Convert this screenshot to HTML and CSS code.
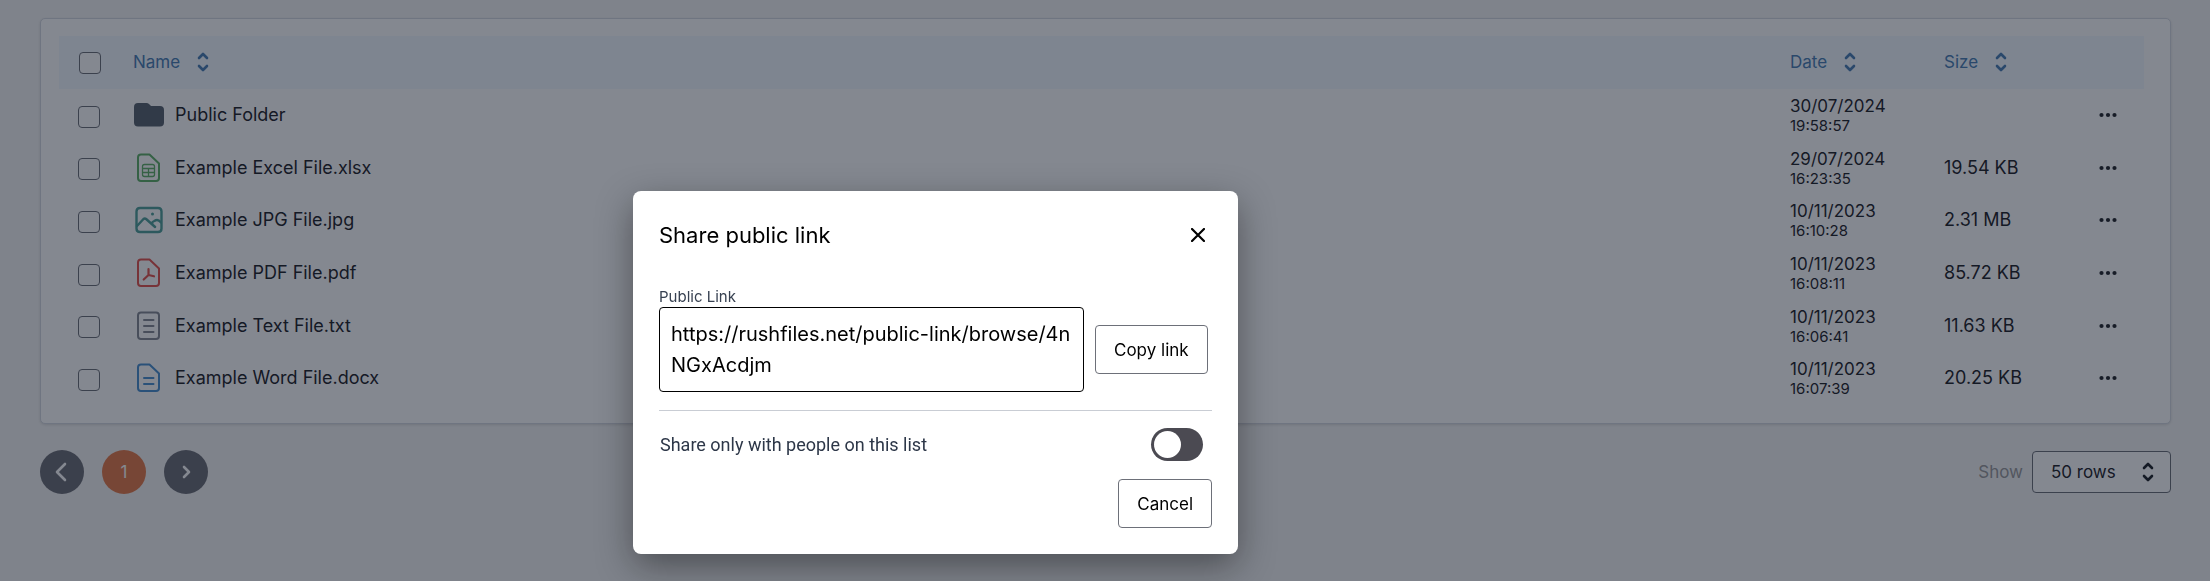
FILE: index.html
```
<!DOCTYPE html>
<html lang="en">
<head>
<meta charset="utf-8">
<title>Files</title>
<link rel="stylesheet" href="styles.css">
</head>
<body>
<svg class="sprite" aria-hidden="true">
  <symbol id="sort" viewBox="0 0 12 20"><path d="M2 6l4-4 4 4M2 14l4 4 4-4" fill="none" stroke="currentColor" stroke-width="2.6" stroke-linecap="round" stroke-linejoin="round"/></symbol>
  <symbol id="dots" viewBox="0 0 18 6"><circle cx="2.5" cy="3" r="2.1"/><circle cx="9" cy="3" r="2.1"/><circle cx="15.5" cy="3" r="2.1"/></symbol>
</svg>

<main class="page">
  <section class="card">
    <table class="files">
      <thead>
        <tr>
          <th class="col-check"><input type="checkbox" class="check" aria-label="Select all"></th>
          <th><button class="sort">Name <svg class="sort-icon"><use href="#sort"/></svg></button></th>
          <th class="col-date"><button class="sort">Date <svg class="sort-icon"><use href="#sort"/></svg></button></th>
          <th class="col-size"><button class="sort">Size <svg class="sort-icon"><use href="#sort"/></svg></button></th>
          <th class="col-menu"></th>
        </tr>
      </thead>
      <tbody>
        <tr>
          <td><input type="checkbox" class="check" aria-label="Select Public Folder"></td>
          <td><div class="file"><svg class="icon folder" viewBox="0 0 30 30"><path d="M4 3h8.500q1.500 0 2.500 1l2 2H26q4 0 4 4v12.500q0 4-4 4H4q-4 0-4-4V7q0-4 4-4z" fill="currentColor"/></svg>Public Folder</div></td>
          <td class="date">30/07/2024<small>19:58:57</small></td>
          <td></td>
          <td><button class="menu" aria-label="Actions"><svg class="dots"><use href="#dots"/></svg></button></td>
        </tr>
        <tr>
          <td><input type="checkbox" class="check" aria-label="Select Example Excel File.xlsx"></td>
          <td><div class="file"><svg class="icon excel" viewBox="0 0 30 30"><path d="M7 1.500h8.500l9.500 9V25q0 3-3 3H7q-3 0-3-3V4.500q0-3 3-3z" stroke-width="2"/><path d="M10.500 11.500h8q2 0 2 2v8q0 2-2 2h-8q-2 0-2-2v-8q0-2 2-2zM8.500 15.500h12M8.500 19.500h12M14.500 15.500v8" stroke-width="1.300"/></svg>Example Excel File.xlsx</div></td>
          <td class="date">29/07/2024<small>16:23:35</small></td>
          <td>19.54 KB</td>
          <td><button class="menu" aria-label="Actions"><svg class="dots"><use href="#dots"/></svg></button></td>
        </tr>
        <tr>
          <td><input type="checkbox" class="check" aria-label="Select Example JPG File.jpg"></td>
          <td><div class="file"><svg class="icon image" viewBox="0 0 30 30"><path d="M6 3h18q3.500 0 3.500 3.500v17q0 3.500-3.500 3.500H6q-3.500 0-3.500-3.500v-17Q2.500 3 6 3z" stroke-width="2.400"/><path d="M3 21l6.500-7q1.300-1.200 2.600 0l9 8M18.500 19q-1.500-1.500 1.800-3 3.500-2.500 6.500 1.200" stroke-width="2.400"/><circle cx="18.500" cy="9" r="1.500" fill="currentColor" stroke="none"/></svg>Example JPG File.jpg</div></td>
          <td class="date">10/11/2023<small>16:10:28</small></td>
          <td>2.31 MB</td>
          <td><button class="menu" aria-label="Actions"><svg class="dots"><use href="#dots"/></svg></button></td>
        </tr>
        <tr>
          <td><input type="checkbox" class="check" aria-label="Select Example PDF File.pdf"></td>
          <td><div class="file"><svg class="icon pdf" viewBox="0 0 30 30"><path d="M7 1.500h8.500l9.500 9V25q0 3-3 3H7q-3 0-3-3V4.500q0-3 3-3z" stroke-width="2"/><path d="M14.500 11v6M14.500 17l5.500 1.300M14.500 17l-4.800 4.500" stroke-width="2.200"/></svg>Example PDF File.pdf</div></td>
          <td class="date">10/11/2023<small>16:08:11</small></td>
          <td>85.72 KB</td>
          <td><button class="menu" aria-label="Actions"><svg class="dots"><use href="#dots"/></svg></button></td>
        </tr>
        <tr>
          <td><input type="checkbox" class="check" aria-label="Select Example Text File.txt"></td>
          <td><div class="file"><svg class="icon text" viewBox="0 0 30 30"><path d="M7 1.500h15q3 0 3 3V25q0 3-3 3H7q-3 0-3-3V4.500q0-3 3-3z" stroke-width="2"/><path d="M10 9h9.500M10 15h9.500M10 21h9.500" stroke-width="2"/></svg>Example Text File.txt</div></td>
          <td class="date">10/11/2023<small>16:06:41</small></td>
          <td>11.63 KB</td>
          <td><button class="menu" aria-label="Actions"><svg class="dots"><use href="#dots"/></svg></button></td>
        </tr>
        <tr>
          <td><input type="checkbox" class="check" aria-label="Select Example Word File.docx"></td>
          <td><div class="file"><svg class="icon word" viewBox="0 0 30 30"><path d="M7 1.500h8.500l9.500 9V25q0 3-3 3H7q-3 0-3-3V4.500q0-3 3-3z" stroke-width="2"/><path d="M10 15h9.500M10 21h9.500" stroke-width="2"/></svg>Example Word File.docx</div></td>
          <td class="date">10/11/2023<small>16:07:39</small></td>
          <td>20.25 KB</td>
          <td><button class="menu" aria-label="Actions"><svg class="dots"><use href="#dots"/></svg></button></td>
        </tr>
      </tbody>
    </table>
  </section>

  <footer class="footer">
    <nav class="pager" aria-label="Pages">
      <button class="page-btn" aria-label="Previous"><svg width="20" height="20" viewBox="0 0 20 20"><path d="M13 2L5 10l8 8"/></svg></button>
      <button class="page-btn current">1</button>
      <button class="page-btn" aria-label="Next"><svg width="20" height="20" viewBox="0 0 20 20"><path d="M8 5l5 5-5 5"/></svg></button>
    </nav>
    <div class="rows">
      <label for="rows">Show</label>
      <div class="select">
        <select id="rows"><option>50 rows</option></select>
        <svg class="sort-icon select-icon"><use href="#sort"/></svg>
      </div>
    </div>
  </footer>
</main>

<div class="overlay">
  <section class="modal" role="dialog" aria-labelledby="title">
    <header class="modal-head">
      <h2 id="title">Share public link</h2>
      <button class="close" aria-label="Close"><svg width="14" height="14" viewBox="0 0 14 14"><path d="M1 1l12 12M13 1L1 13"/></svg></button>
    </header>
    <label class="field-label" for="link">Public Link</label>
    <div class="link-row">
      <textarea id="link" rows="2" readonly>https://rushfiles.net/public-link/browse/4nNGxAcdjm</textarea>
      <button class="btn">Copy link</button>
    </div>
    <div class="share-row">
      <label for="only">Share only with people on this list</label>
      <input type="checkbox" class="toggle" id="only">
    </div>
    <div class="actions"><button class="btn">Cancel</button></div>
  </section>
</div>
</body>
</html>
```
FILE: styles.css
```
* { box-sizing: border-box; }
body {
  margin: 0;
  background: #f5f5f5;
  color: #1f2329;
  font: 18px/24px Inter, sans-serif;
  overflow: hidden;
}
button, select, textarea { font: inherit; color: inherit; }
button { background: none; border: 0; padding: 0; }
.sprite { display: none; }

.page { padding: 18px 39px 0 40px; }
.card {
  background: #fff;
  border: 1px solid #d5d8e0;
  border-radius: 5px;
  padding: 17px 26px 18px 18px;
  box-shadow: 0 1px 3px rgba(0, 0, 0, .12);
}
.files { width: 100%; border-collapse: collapse; table-layout: fixed; }
.files th, .files td { padding: 0; text-align: left; font-weight: 400; }
.files th { height: 53px; padding-bottom: 2px; background: #f3f8ff; }
.files th:first-child { padding-left: 20px; }
.files td:first-child { padding-left: 19px; }
.files td { height: 53px; padding-bottom: 1px; }
.files tr:nth-child(3n + 2) td { height: 52px; }
.col-check { width: 74px; }
.col-date { width: 154px; }
.col-size { width: 155px; }
.col-menu { width: 45px; }
.check {
  appearance: none;
  display: block;
  width: 22px;
  height: 22px;
  margin: 3px 0 0;
  background: #fff;
  border: 1px solid #6d7079;
  border-radius: 4px;
}
.sort { display: flex; align-items: center; gap: 17px; color: #4a7fb5; font-size: 17px; }
.sort-icon { width: 12px; height: 20px; }
.file { display: flex; align-items: center; gap: 11px; padding-left: 1px; }
.icon { width: 30px; height: 30px; fill: none; stroke: currentColor; stroke-linecap: round; stroke-linejoin: round; }
.folder { color: #59636f; stroke: none; }
.excel { color: #60b068; }
.image { color: #50a09a; }
.pdf { color: #e5554f; }
.text { color: #868a95; }
.word { color: #4a90d0; }
.files .date { font-size: 17px; line-height: 22px; }
.date small { display: block; font-size: 15px; line-height: 18px; }
.menu { display: block; }
.dots { display: block; width: 18px; height: 6px; fill: #24262c; }

.footer { display: flex; justify-content: space-between; align-items: center; padding-top: 26px; }
.pager { display: flex; gap: 18px; }
.page-btn {
  display: grid;
  place-items: center;
  width: 44px;
  height: 44px;
  border-radius: 50%;
  background: #6d6e76;
  color: #fff;
  font-size: 17px;
}
.page-btn svg { fill: none; stroke: #fff; stroke-width: 2.6; stroke-linecap: round; stroke-linejoin: round; }
.page-btn.current { background: #e57b4b; }
.rows { display: flex; align-items: center; gap: 9px; color: #9a9a9c; font-size: 17px; }
.select { display: grid; align-items: center; color: #1f2329; }
.select select {
  grid-area: 1 / 1;
  appearance: none;
  width: 139px;
  height: 42px;
  padding: 0 18px;
  background: #fff;
  border: 1px solid #6d7079;
  border-radius: 4px;
}
.select-icon { grid-area: 1 / 1; justify-self: end; margin-right: 17px; pointer-events: none; }

.overlay {
  position: fixed;
  inset: 0;
  display: flex;
  justify-content: center;
  align-items: flex-start;
  padding: 191px 339px 0 0;
  background: rgba(9, 17, 33, .5);
}
.modal {
  width: 605px;
  padding: 26px;
  background: #fff;
  border-radius: 8px;
  color: #000;
  box-shadow: 0 12px 36px rgba(0, 0, 0, .4);
}
.modal-head { display: flex; justify-content: space-between; align-items: center; height: 36px; padding-right: 7px; }
.modal h2 { margin: 0; font-size: 22px; font-weight: 400; }
.close { display: flex; }
.close svg { fill: none; stroke: #000; stroke-width: 2.2; stroke-linecap: round; }
.field-label { display: block; margin-top: 34px; font-size: 15px; line-height: 20px; color: #374151; }
.link-row { display: flex; align-items: center; gap: 11px; padding-bottom: 18px; border-bottom: 1px solid #c9cdd4; }
.link-row textarea {
  width: 425px;
  height: 85px;
  padding: 11px;
  border: 1px solid #000;
  border-radius: 4px;
  resize: none;
  outline: 0;
  overflow: hidden;
  font-size: 20px;
  line-height: 31px;
  word-break: break-all;
}
.btn {
  height: 49px;
  padding: 0 18px;
  border: 1px solid #6d7079;
  border-radius: 4px;
  background: #fff;
}
.modal .btn { font-size: 17px; }
.share-row {
  display: flex;
  justify-content: space-between;
  align-items: center;
  padding: 17px 9px 0 1px;
  color: #2d3748;
  font-family: Roboto, sans-serif;
}
.toggle {
  appearance: none;
  display: flex;
  align-items: center;
  width: 52px;
  height: 33px;
  margin: 0;
  padding: 0 3px;
  border-radius: 17px;
  background: #4b4a52;
}
.toggle::before { content: ""; width: 27px; height: 27px; border-radius: 50%; background: #fff; }
.actions { display: flex; justify-content: flex-end; padding-top: 18px; }
```
